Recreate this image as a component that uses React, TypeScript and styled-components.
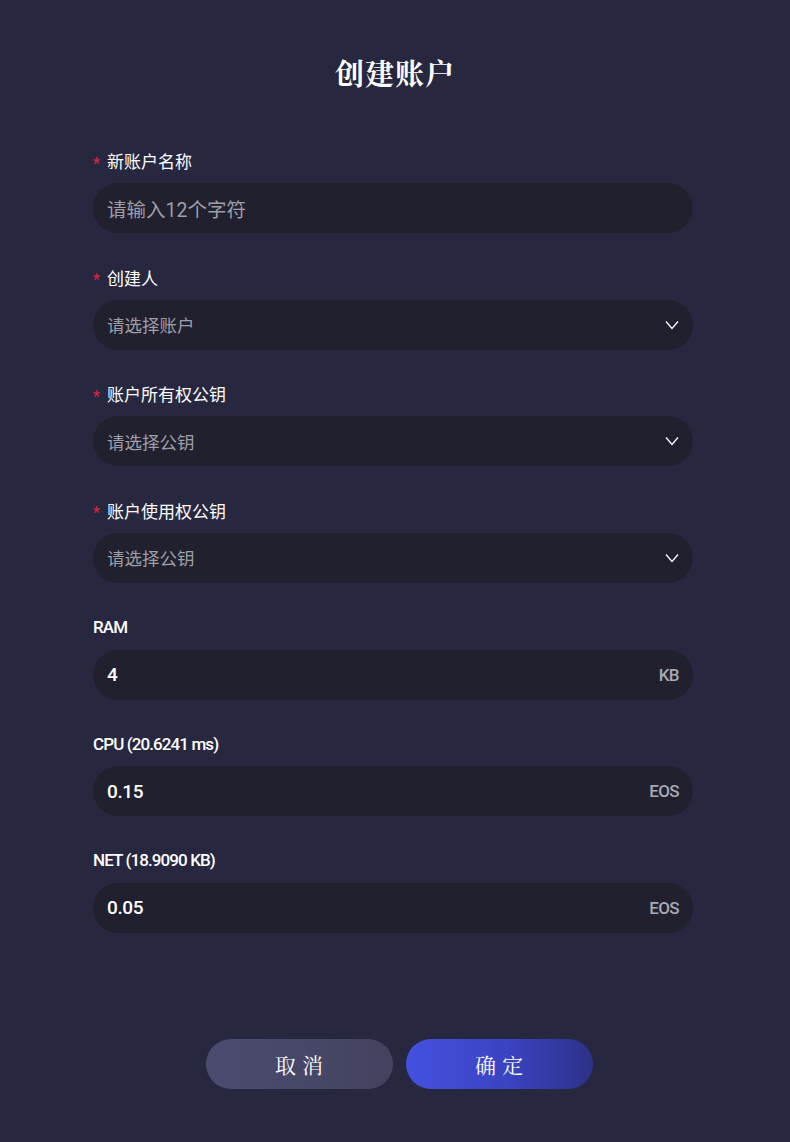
import React from "react";
import styled, { createGlobalStyle } from "styled-components";

const Global = createGlobalStyle`
  html, body { margin: 0; padding: 0; background: #272740; }
  body { font-family: Roboto, "Noto Sans CJK SC", sans-serif; }
  * { box-sizing: border-box; }
`;

const Page = styled.div`
  width: 790px;
  min-height: 1142px;
  background: #272740;
  display: flex;
  flex-direction: column;
  align-items: center;
  padding-top: 52px;
`;

const Title = styled.h1`
  margin: 0;
  font-family: "Noto Serif CJK SC", "Noto Sans CJK SC", serif;
  font-size: 29px;
  font-weight: 700;
  color: #ffffff;
  line-height: 42px;
  letter-spacing: 1px;
`;

const Form = styled.div`
  width: 600px;
  margin-top: 54px;
  margin-right: 4px;
  display: flex;
  flex-direction: column;
  gap: 31.67px;
`;

const Field = styled.div`
  display: flex;
  flex-direction: column;
  gap: 10px;
`;

const Label = styled.div<{ $latin?: boolean }>`
  display: flex;
  align-items: center;
  height: 25px;
  font-size: 17px;
  font-weight: ${(p) => (p.$latin ? 500 : 400)};
  letter-spacing: ${(p) => (p.$latin ? "-0.9px" : "0")};
  color: #ffffff;
  font-family: Roboto, "Noto Sans CJK SC", sans-serif;
`;

const Star = styled.span`
  color: #e4233f;
  font-size: 16px;
  width: 14px;
  margin-top: 5px;
`;

const Box = styled.div`
  height: 50px;
  border-radius: 25px;
  background: #20202f;
  display: flex;
  align-items: center;
  justify-content: space-between;
  padding: 0 14px;
`;

const Text = styled.span<{ $placeholder?: boolean; $size: number }>`
  font-size: ${(p) => p.$size}px;
  font-weight: ${(p) => (p.$placeholder ? 400 : 500)};
  letter-spacing: ${(p) => (p.$placeholder ? "0" : "-0.4px")};
  color: ${(p) => (p.$placeholder ? "#9e9ea8" : "#ffffff")};
`;

const Unit = styled.span`
  font-size: 17px;
  font-weight: 500;
  letter-spacing: -0.6px;
  color: #a9a9b6;
`;

const Buttons = styled.div`
  display: flex;
  gap: 13px;
  margin-top: 106px;
  margin-left: 8px;
`;

const Button = styled.button<{ $primary?: boolean }>`
  width: 187px;
  height: 50px;
  border: none;
  border-radius: 25px;
  font-family: "Noto Serif CJK SC", "Noto Sans CJK SC", serif;
  font-size: 21px;
  letter-spacing: 6px;
  text-indent: 6px;
  color: #ffffff;
  background: ${(p) =>
    p.$primary
      ? "linear-gradient(90deg, #4451e0 0%, #3a43c0 55%, #2d3188 100%)"
      : "linear-gradient(90deg, #4b4b70 0%, #43435f 100%)"};
`;

const Chevron = () => (
  <svg width="14" height="10" viewBox="0 0 14 10" fill="none">
    <path d="M1 1.5 L7 8.5 L13 1.5" stroke="#ffffff" strokeWidth="1.3" />
  </svg>
);

type F = {
  label: string;
  required?: boolean;
  value: string;
  placeholder?: boolean;
  select?: boolean;
  unit?: string;
  size: number;
};

const fields: F[] = [
  { label: "新账户名称", required: true, value: "请输入12个字符", placeholder: true, size: 19.5 },
  { label: "创建人", required: true, value: "请选择账户", placeholder: true, select: true, size: 17.5 },
  { label: "账户所有权公钥", required: true, value: "请选择公钥", placeholder: true, select: true, size: 17.5 },
  { label: "账户使用权公钥", required: true, value: "请选择公钥", placeholder: true, select: true, size: 17.5 },
  { label: "RAM", value: "4", unit: "KB", size: 19 },
  { label: "CPU (20.6241 ms)", value: "0.15", unit: "EOS", size: 19 },
  { label: "NET (18.9090 KB)", value: "0.05", unit: "EOS", size: 19 },
];

export default function App() {
  return (
    <Page>
      <Global />
      <Title>创建账户</Title>
      <Form>
        {fields.map((f, i) => (
          <Field key={i}>
            <Label $latin={!f.required}>
              {f.required && <Star>*</Star>}
              {f.label}
            </Label>
            <Box>
              <Text $placeholder={f.placeholder} $size={f.size}>
                {f.value}
              </Text>
              {f.select && <Chevron />}
              {f.unit && <Unit>{f.unit}</Unit>}
            </Box>
          </Field>
        ))}
      </Form>
      <Buttons>
        <Button>取消</Button>
        <Button $primary>确定</Button>
      </Buttons>
    </Page>
  );
}
